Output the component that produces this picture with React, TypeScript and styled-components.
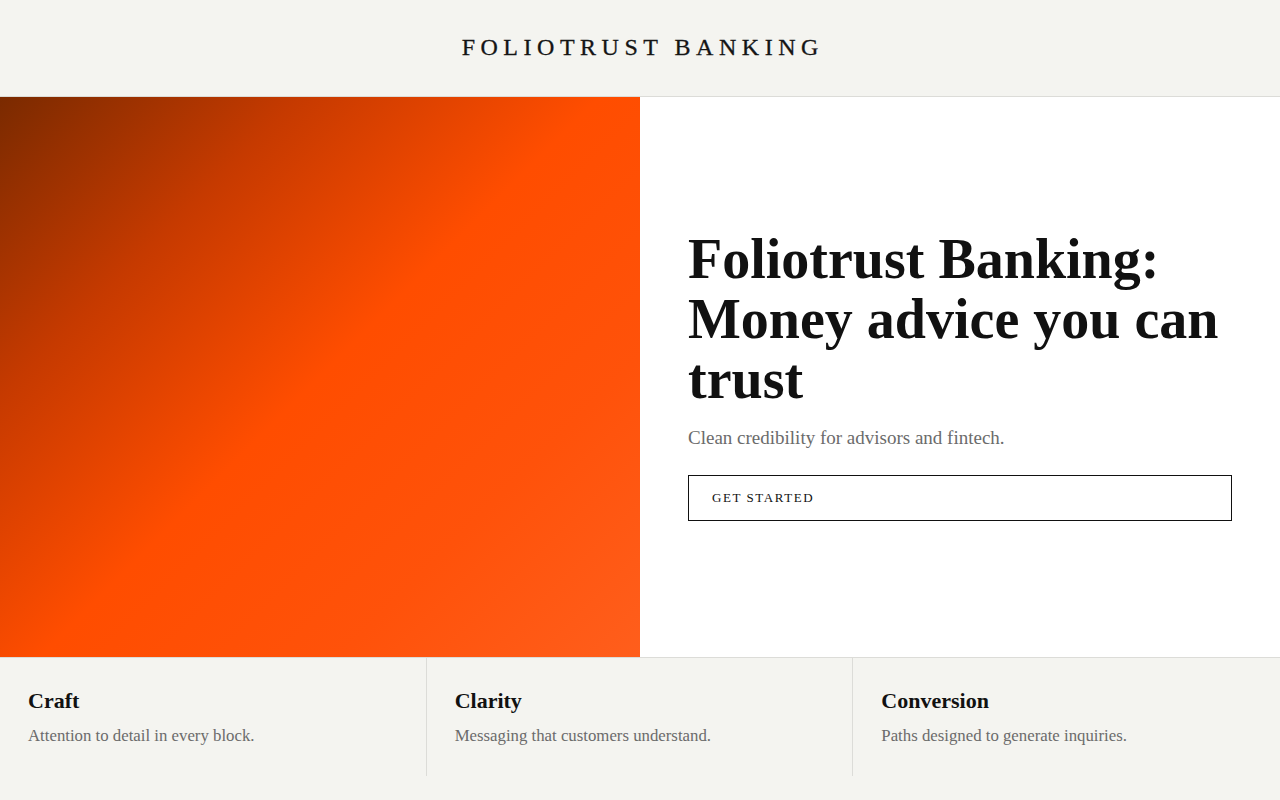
import {createGlobalStyle, styled} from "styled-components";

const GlobalStyle = createGlobalStyle`
  * { box-sizing: border-box; }
  html, body { margin: 0; padding: 0; background: #f4f4f0; }
  body { font-family: "Liberation Serif", "DejaVu Serif", serif; color: #111; }
`;

const Page = styled.div`
  min-height: 800px;
  display: flex;
  flex-direction: column;
  background: #f4f4f0;
`;

const Header = styled.header`
  height: 97px;
  display: flex;
  align-items: center;
  justify-content: center;
  border-bottom: 1px solid #dcdcd8;
  padding-bottom: 2px;
`;

const Brand = styled.div`
  font-size: 24px;
  letter-spacing: 0.23em;
  margin-right: -0.23em;
  font-weight: 400;
  color: #151515;
  -webkit-text-stroke: 0.3px #151515;
`;

const Hero = styled.section`
  display: grid;
  grid-template-columns: 1fr 1fr;
  height: 560px;
`;

const Visual = styled.div`
  background: linear-gradient(135deg, #7a2a00 0%, #c63a00 25%, #ff4d00 50%, #ff520a 75%, #ff5e1c 100%);
`;

const Panel = styled.div`
  background: #fff;
  padding: 0 48px 5px;
  display: flex;
  flex-direction: column;
  justify-content: center;
`;

const Title = styled.h1`
  margin: 0;
  font-size: 56px;
  line-height: 60px;
  font-weight: 700;
  color: #111;
`;

const Lead = styled.p`
  margin: 18px 0 0;
  font-size: 19px;
  line-height: 22px;
  color: #6b6b6b;
`;

const Button = styled.button`
  margin-top: 26px;
  height: 46px;
  width: 100%;
  border: 1px solid #111;
  background: #fff;
  text-align: left;
  padding: 0 23px;
  font-family: inherit;
  font-size: 13px;
  letter-spacing: 0.12em;
  color: #111;
  cursor: pointer;
`;

const Features = styled.section`
  display: grid;
  grid-template-columns: repeat(3, 1fr);
  border-top: 1px solid #dcdcd8;
`;

const Feature = styled.div<{$last?: boolean}>`
  padding: 30px 28px 30px;
  height: 118px;
  border-right: ${(p) => (p.$last ? "none" : "1px solid #dcdcd8")};
`;

const FeatureTitle = styled.h3`
  margin: 0;
  font-size: 22px;
  line-height: 26px;
  font-weight: 700;
  color: #111;
`;

const FeatureText = styled.p`
  margin: 12px 0 0;
  font-size: 16.8px;
  line-height: 20px;
  color: #6b6b6b;
`;

const features = [
  {title: "Craft", text: "Attention to detail in every block."},
  {title: "Clarity", text: "Messaging that customers understand."},
  {title: "Conversion", text: "Paths designed to generate inquiries."},
];

export default function App() {
  return (
    <Page>
      <GlobalStyle />
      <Header>
        <Brand>FOLIOTRUST BANKING</Brand>
      </Header>
      <Hero>
        <Visual />
        <Panel>
          <Title>Foliotrust Banking: Money advice you can trust</Title>
          <Lead>Clean credibility for advisors and fintech.</Lead>
          <Button>GET STARTED</Button>
        </Panel>
      </Hero>
      <Features>
        {features.map((f, idx) => (
          <Feature key={f.title} $last={idx === features.length - 1}>
            <FeatureTitle>{f.title}</FeatureTitle>
            <FeatureText>{f.text}</FeatureText>
          </Feature>
        ))}
      </Features>
    </Page>
  );
}
